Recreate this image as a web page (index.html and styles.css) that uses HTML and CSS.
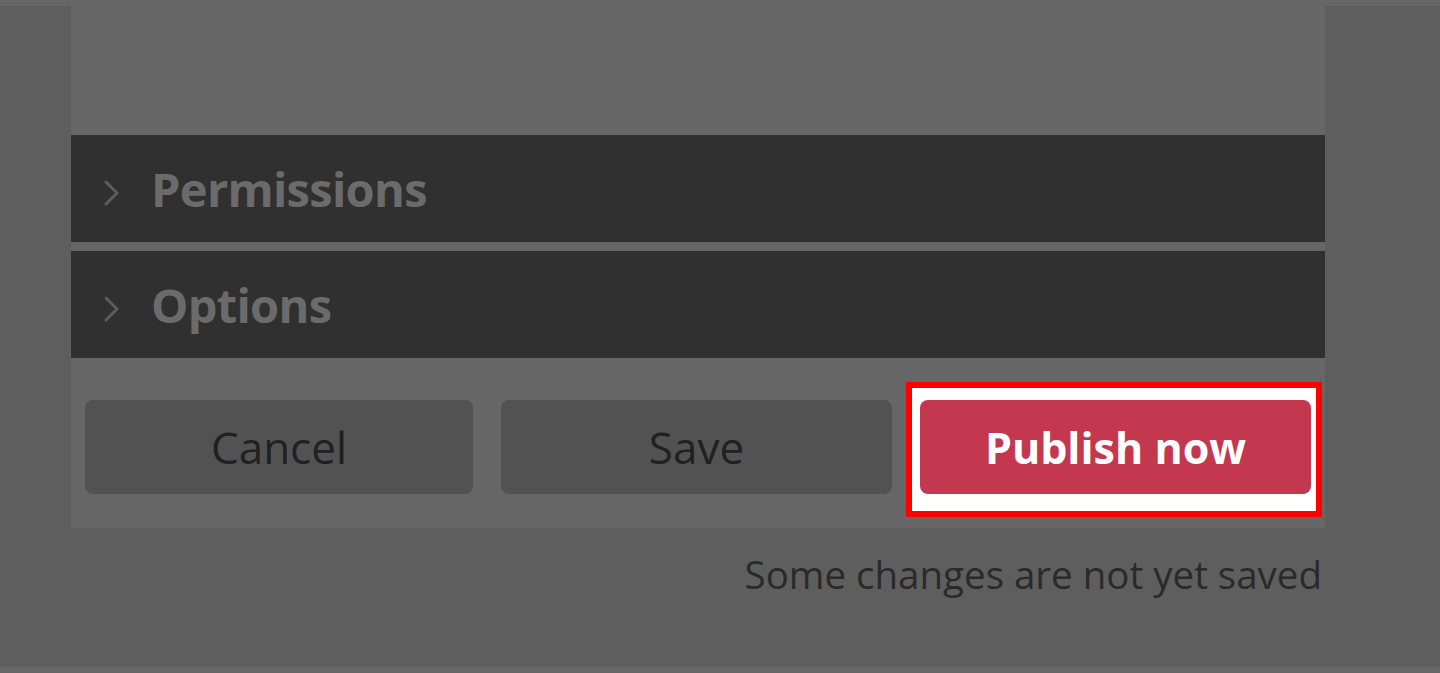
FILE: index.html
```html
<!DOCTYPE html>
<html lang="en">
<head>
<meta charset="utf-8">
<title>Publish</title>
<link rel="stylesheet" href="styles.css">
</head>
<body>
<div class="frame">
  <div class="column">
    <div class="panel">
      <div class="section">
        <svg class="chev" viewBox="0 0 18 28" width="18" height="28"><path d="M3 3 L14 14 L3 25" fill="none" stroke="#5c5c5c" stroke-width="3" stroke-linecap="round" stroke-linejoin="round"/></svg>
        <span class="section-title">Permissions</span>
      </div>
      <div class="section">
        <svg class="chev" viewBox="0 0 18 28" width="18" height="28"><path d="M3 3 L14 14 L3 25" fill="none" stroke="#5c5c5c" stroke-width="3" stroke-linecap="round" stroke-linejoin="round"/></svg>
        <span class="section-title">Options</span>
      </div>
      <div class="actions">
        <button class="btn btn-gray">Cancel</button>
        <button class="btn btn-gray">Save</button>
        <div class="publish-wrap">
          <button class="btn btn-primary">Publish now</button>
        </div>
      </div>
    </div>
    <p class="status">Some changes are not yet saved</p>
  </div>
</div>
</body>
</html>
```

FILE: styles.css
```css
html, body {
  margin: 0;
  padding: 0;
}
body {
  background: #666666;
  font-family: "Open Sans", "Noto Sans", sans-serif;
}
.frame {
  margin-top: 6px;
  height: 661px;
  background: #5e5e5e;
  padding: 0 115px 0 71px;
  box-sizing: border-box;
}
.column {
  display: flex;
  flex-direction: column;
}
.panel {
  background: #666666;
  height: 522px;
  padding-top: 129px;
  box-sizing: border-box;
  display: flex;
  flex-direction: column;
}
.section {
  height: 107px;
  background: #303030;
  display: flex;
  align-items: center;
  padding-left: 32px;
  box-sizing: border-box;
}
.section + .section {
  margin-top: 9px;
}
.chev {
  margin-top: 8px;
  flex: none;
}
.section-title {
  margin-left: 30px;
  font-size: 47px;
  font-weight: 700;
  color: #6b6b6b;
  letter-spacing: -0.7px;
}
.actions {
  margin-top: 42px;
  padding: 0 13px 0 14px;
  display: grid;
  grid-template-columns: 388px 391px 391px;
  column-gap: 28px;
}
.btn {
  height: 94px;
  border: none;
  border-radius: 8px;
  font-family: "Open Sans", "Noto Sans", sans-serif;
  font-size: 44px;
  padding: 0;
  width: 100%;
}
.btn-gray {
  background: #525252;
  color: #212121;
  font-weight: 500;
}
.publish-wrap {
  position: relative;
  isolation: isolate;
}
.publish-wrap::before {
  content: "";
  position: absolute;
  left: -14px;
  top: -18px;
  right: -11px;
  bottom: -23px;
  border: 6px solid #ff0000;
  background: #ffffff;
  z-index: -1;
}
.btn-primary {
  background: #c3374f;
  color: #ffffff;
  font-weight: 700;
  font-size: 43px;
}
.status {
  margin: 20px 3px 0 0;
  text-align: right;
  font-size: 38.5px;
  font-weight: 500;
  color: #2a2a2a;
}
```
